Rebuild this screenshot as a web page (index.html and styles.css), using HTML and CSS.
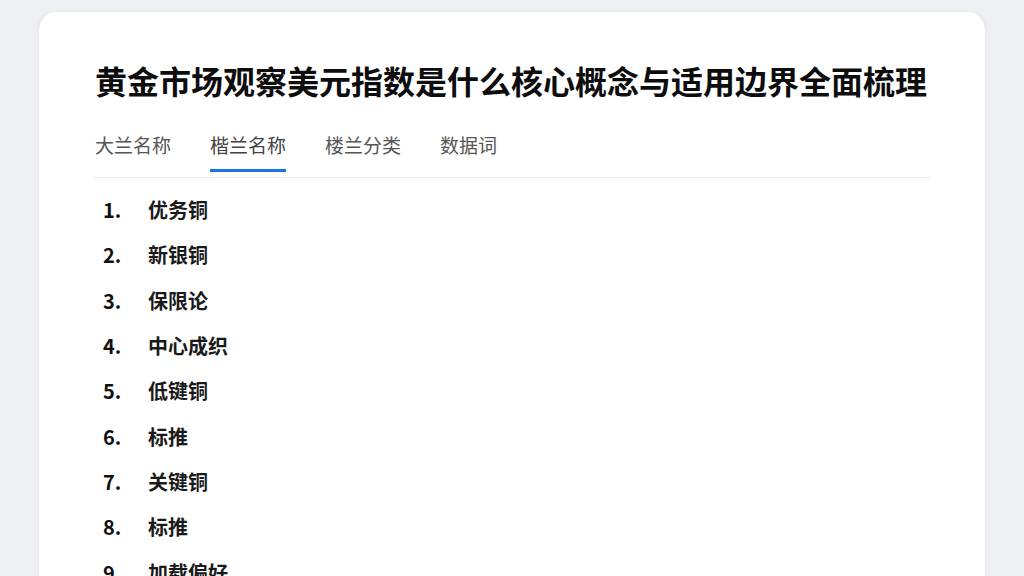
FILE: index.html
```html
<!DOCTYPE html>
<html lang="zh-CN">
<head>
<meta charset="utf-8">
<title>黄金市场观察</title>
<link rel="stylesheet" href="styles.css">
</head>
<body>
<main class="card">
  <h1 class="title">黄金市场观察美元指数是什么核心概念与适用边界全面梳理</h1>
  <nav class="tabs">
    <div class="tab"><span class="tab-label">大兰名称</span></div>
    <div class="tab active"><span class="tab-label">楷兰名称</span></div>
    <div class="tab"><span class="tab-label">楼兰分类</span></div>
    <div class="tab"><span class="tab-label">数据词</span></div>
  </nav>
  <ol class="list">
    <li class="row"><span class="num">1.</span><span class="name">优务铜</span></li>
    <li class="row"><span class="num">2.</span><span class="name">新银铜</span></li>
    <li class="row"><span class="num">3.</span><span class="name">保限论</span></li>
    <li class="row"><span class="num">4.</span><span class="name">中心成织</span></li>
    <li class="row"><span class="num">5.</span><span class="name">低键铜</span></li>
    <li class="row"><span class="num">6.</span><span class="name">标推</span></li>
    <li class="row"><span class="num">7.</span><span class="name">关键铜</span></li>
    <li class="row"><span class="num">8.</span><span class="name">标推</span></li>
    <li class="row"><span class="num">9.</span><span class="name">加载偏好</span></li>
  </ol>
</main>
</body>
</html>
```
FILE: styles.css
```css
html, body {
  margin: 0;
  padding: 0;
  height: 100%;
  overflow: hidden;
}
body {
  background: #eef0f3;
  font-family: "Noto Sans CJK SC", "Noto Sans", sans-serif;
  color: #111;
}
.card {
  margin: 12px 0 0 39px;
  width: 946px;
  box-sizing: border-box;
  min-height: 700px;
  background: #fff;
  border-radius: 18px;
  box-shadow: 0 1px 6px rgba(20, 30, 50, 0.06);
  padding: 47px 55px 0 56px;
}
.title {
  margin: 0;
  font-size: 32px;
  line-height: 42px;
  font-weight: 700;
  color: #0d0d0d;
  white-space: nowrap;
}
.tabs {
  display: flex;
  gap: 39px;
  margin-top: 32px;
  border-bottom: 1px solid #e6e7ea;
  padding-bottom: 5px;
}
.tab {
  display: flex;
  flex-direction: column;
}
.tab-label {
  font-size: 19px;
  line-height: 24px;
  color: #555;
  padding-bottom: 12px;
  border-bottom: 3px solid transparent;
}
.tab.active .tab-label {
  color: #444;
  border-bottom-color: #1a73e8;
}
.list {
  list-style: none;
  margin: 0;
  padding: 9px 0 0 8px;
}
.row {
  display: flex;
  align-items: center;
  height: 45.3px;
  font-size: 20px;
}
.num {
  width: 45px;
  font-weight: 700;
  color: #111;
}
.name {
  font-weight: 700;
  color: #1a1a1a;
}
```
